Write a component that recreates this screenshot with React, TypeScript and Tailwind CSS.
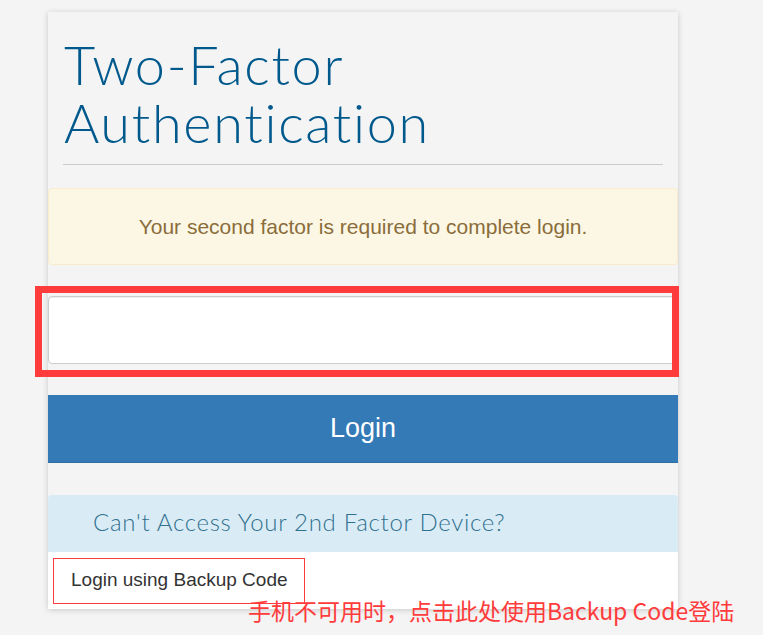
import React from "react";

const raleway: React.CSSProperties = {
  fontFamily: 'Lato, "Open Sans", sans-serif',
  fontVariantLigatures: "none",
};

export default function App() {
  return (
    <div className="relative min-h-[635px] w-[763px] bg-[#f4f4f4] pt-[12px]" style={{ fontFamily: '"Liberation Sans", Arial, sans-serif' }}>
      <div className="ml-[48px] flex w-[630px] flex-col bg-[#f4f4f4] shadow-[0_1px_6px_rgba(0,0,0,0.18)]">
        <div className="px-[15px] pt-[24px]">
          <h1 className="pl-[1px] text-[54px] font-light leading-[58px] tracking-[1.7px] text-[#00598c]" style={raleway}>
            Two-Factor
            <br />
            Authentication
          </h1>
          <div className="mt-[12px] h-px bg-[#cccccc]" />
        </div>
        <div className="mt-[23px] flex h-[77px] items-center justify-center rounded-[4px] border border-[#faebcc] bg-[#fcf7e4] pt-[1px] text-[21px] text-[#8a6d3b]">
          Your second factor is required to complete login.
        </div>
        <div className="mt-[31px] h-[68px] rounded-[4px] border border-[#cccccc] bg-white shadow-[inset_0_1px_1px_rgba(0,0,0,0.075)]" />
        <div className="mt-[31px] flex h-[68px] items-center justify-center border-b border-[#2e6da4] bg-[#337ab7] text-[27px] text-white">
          Login
        </div>
        <div className="mt-[32px] flex h-[57px] items-center rounded-t-[4px] bg-[#d9ecf6] pb-[3px] pl-[45px] text-[24px] font-light tracking-[0.7px] text-[#31708f]" style={raleway}>
          Can't Access Your 2nd Factor Device?
        </div>
        <div className="flex h-[57px] items-center bg-white pl-[23px] text-[19px] text-[#333333]">
          Login using Backup Code
        </div>
      </div>

      <div className="pointer-events-none absolute left-[35px] top-[286px] h-[91px] w-[644px] border-[7px] border-[#ff3b3b]" />
      <div className="pointer-events-none absolute left-[53px] top-[558px] h-[46px] w-[252px] border border-[#ff3b3b]" />
      <div className="absolute left-[248px] top-[594px] text-[23px] leading-[32px] text-[#ff3b3b]" style={{ fontFamily: '"Noto Sans CJK SC", sans-serif' }}>
        手机不可用时，点击此处使用Backup Code登陆
      </div>
    </div>
  );
}
